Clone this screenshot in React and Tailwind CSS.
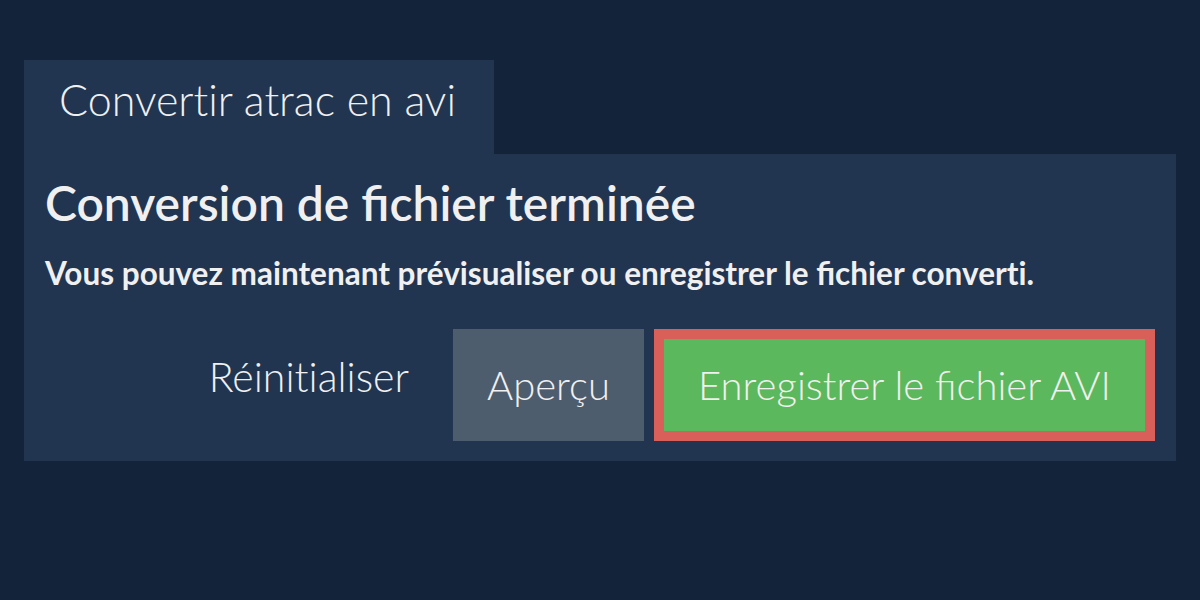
import React from "react";

// ZWNJ keeps "ti" from forming a ligature, like the reference font
const ZW = "\u200C";

const App = () => {
  return (
    <div className="min-h-[600px] w-full bg-[#12233a] px-6 pt-[60px] font-['Lato','Liberation_Sans',sans-serif] text-[#f0f0f0]">
      <div className="h-[94px] w-[470px] bg-[#213550] pl-[35px] pt-[14px] text-[43px] font-light leading-[52px]">
        {`Convert${ZW}ir atrac en avi`}
      </div>
      <div className="bg-[#213550] px-[21px] pb-5 pt-5">
        <h1 className="text-[48px] font-semibold leading-[58px]">
          Conversion de fichier terminée
        </h1>
        <p className="mt-[21px] text-[31.5px] font-bold leading-[40px]">
          {`Vous pouvez maintenant prévisualiser ou enregistrer le fichier convert${ZW}i.`}
        </p>
        <div className="mt-9 flex items-start justify-end gap-[10px]">
          <button className="mr-[34px] h-[95px] text-[41px] font-light leading-[48px]">
            {`Réinit${ZW}ialiser`}
          </button>
          <button className="h-[112px] w-[191px] bg-[#4e5d6e] text-[40px] font-light leading-[48px]">
            Aperçu
          </button>
          <button className="h-[112px] w-[501px] border-[10px] border-[#d9605a] bg-[#5cb85c] text-[40px] font-light leading-[48px]">
            Enregistrer le fichier AVI
          </button>
        </div>
      </div>
    </div>
  );
};

export default App;
